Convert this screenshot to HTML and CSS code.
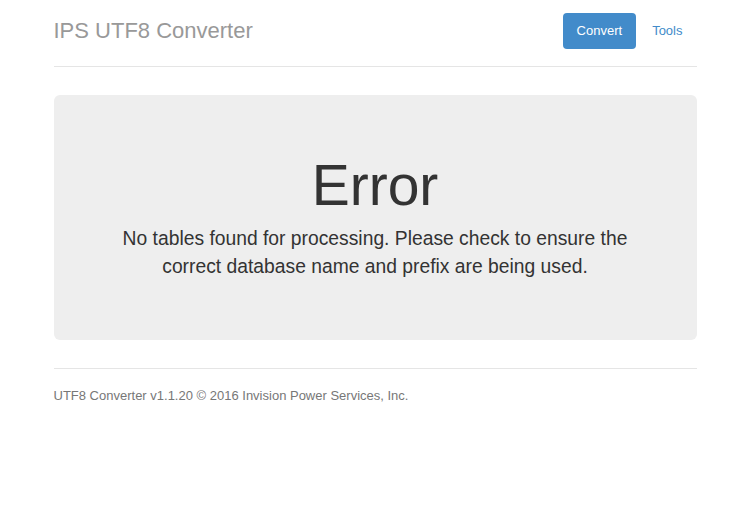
FILE: index.html
```html
<!DOCTYPE html>
<html lang="en">
<head>
    <meta charset="UTF-8">
    <title>IPS UTF8 Converter</title>
    <link rel="stylesheet" href="styles.css">
</head>
<body>
    <div class="container">
        <div class="header">
            <h3 class="brand">IPS UTF8 Converter</h3>
            <ul class="nav">
                <li class="active"><a href="#">Convert</a></li>
                <li><a href="#">Tools</a></li>
            </ul>
        </div>
        <div class="jumbotron">
            <h1>Error</h1>
            <p class="lead">No tables found for processing. Please check to ensure the correct database name and prefix are being used.</p>
        </div>
        <div class="footer">
            <p>UTF8 Converter v1.1.20 &copy; 2016 Invision Power Services, Inc.</p>
        </div>
    </div>
</body>
</html>
```

FILE: styles.css
```css
body{margin: 0;font-family: "Liberation Sans", Arial, sans-serif;font-size: 13px;color: #333;background: #fff}
.container{width: 643px;margin: 0 auto}
.header{display: flex;justify-content: space-between;align-items: center;padding: 13px 0 17px;border-bottom: 1px solid #e5e5e5}
.brand{margin: 0;font-size: 22px;font-weight: normal;color: #999}
.nav{display: flex;gap: 2px;margin: 0;padding: 0;list-style: none}
.nav a{display: block;padding: 9px 14px;line-height: 18px;font-size: 13px;color: #428bca;text-decoration: none;border-radius: 4px}
.nav .active a{background: #428bca;color: #fff}
.jumbotron{margin-top: 28px;padding: 59px 20px 59px;background: #eee;border-radius: 6px;text-align: center}
.jumbotron h1{margin: 0;font-size: 57px;font-weight: normal;line-height: 1.1}
.lead{margin: 8px auto 0;max-width: 540px;font-size: 19.3px;line-height: 28px}
.footer{margin-top: 28px;padding-top: 19px;border-top: 1px solid #e5e5e5}
.footer p{margin: 0;font-size: 13px;color: #777}
```
